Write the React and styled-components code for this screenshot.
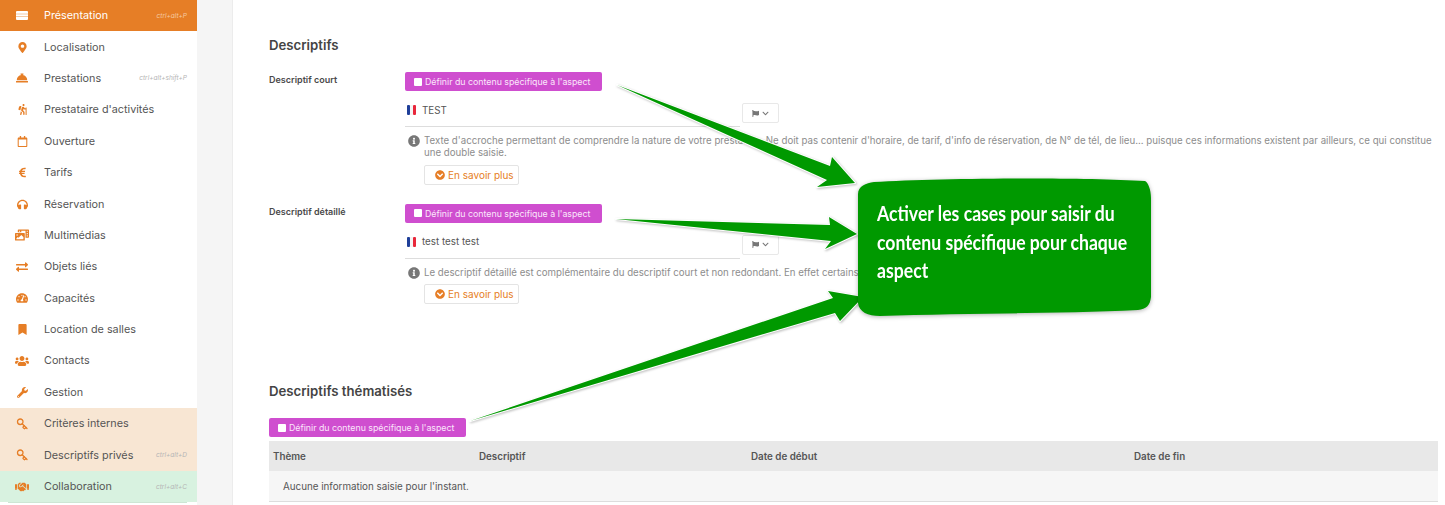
import React from "react";
import styled, { createGlobalStyle } from "styled-components";
import {
  FaMapMarkerAlt,
  FaConciergeBell,
  FaHiking,
  FaRegCalendar,
  FaEuroSign,
  FaHeadphones,
  FaPhotoVideo,
  FaExchangeAlt,
  FaTachometerAlt,
  FaBookmark,
  FaUsers,
  FaWrench,
  FaHandshake,
  FaInfoCircle,
  FaChevronCircleDown,
  FaChevronDown,
  FaFlag,
} from "react-icons/fa";
import { Key } from "lucide-react";

const GlobalStyle = createGlobalStyle`
  html, body { margin: 0; padding: 0; background: #fff; }
  body { font-family: Inter, "Noto Sans", sans-serif; color: #4a4a4a; }
`;

const Page = styled.div`
  position: relative;
  display: flex;
  width: 1445px;
  height: 505px;
  overflow: hidden;
  background: #fff;
`;

const Sidebar = styled.nav`
  width: 197px;
  flex: none;
`;

const tones = {
  active: { bg: "#e67e26", color: "#fff", line: "transparent" },
  peach: { bg: "#f8e6d3", color: "#555", line: "#efe0d0" },
  mint: { bg: "#d8f2e0", color: "#555", line: "#cde6d4" },
  plain: { bg: "#fff", color: "#555", line: "#e4e4e4" },
};

const NavItem = styled.div`
  height: 31.4px;
  box-sizing: border-box;
  background: ${(p) => tones[p.$tone].bg};
  color: ${(p) => tones[p.$tone].color};
  padding: 0 10px 0 8px;
`;

const NavInner = styled.div`
  display: flex;
  align-items: center;
  height: 100%;
  border-bottom: 1px solid ${(p) => tones[p.$tone].line};
`;

const NavIcon = styled.span`
  width: 28px;
  margin-right: 8px;
  display: flex;
  justify-content: center;
  color: ${(p) => (p.$tone === "active" ? "#fff" : "#e67e26")};
  font-size: 11px;
`;

const NavLabel = styled.span`
  font-size: 10.8px;
  flex: 1;
  white-space: nowrap;
`;

const Shortcut = styled.span`
  font-size: 6.5px;
  font-style: italic;
  white-space: nowrap;
  color: ${(p) => (p.$tone === "active" ? "#f5c9a0" : "#b5b5b5")};
`;

const Gutter = styled.div`
  width: 35px;
  flex: none;
  background: #f5f5f5;
  border-right: 1px solid #ececec;
`;

const Main = styled.main`
  flex: 1;
  min-width: 0;
  padding: 37px 7px 0 36px;
`;

const Heading = styled.h2`
  margin: ${(p) => p.$before || 0}px 0 19px;
  font-size: 13.2px;
  line-height: 16px;
  font-weight: 600;
  color: #444;
`;

const Field = styled.div`
  display: grid;
  grid-template-columns: 136px 1fr;
  margin-bottom: 19px;
`;

const FieldLabel = styled.div`
  font-size: 9px;
  font-weight: 600;
  line-height: 16px;
  color: #4a4a4a;
`;

const AspectButton = styled.label`
  display: flex;
  align-items: center;
  gap: 3px;
  width: 197px;
  height: 19px;
  box-sizing: border-box;
  padding-left: 9px;
  background: #cf4ecf;
  border-radius: 2px;
  color: #fbe6fb;
  font-size: 8.8px;
  white-space: nowrap;
`;

const AspectCheck = styled.input.attrs({ type: "checkbox", readOnly: true })`
  appearance: none;
  width: 8px;
  height: 8px;
  margin: 0;
  background: #fff;
  border-radius: 1px;
`;

const Editor = styled.div`
  display: flex;
  margin-top: 10px;
  height: 26px;
`;

const InputLine = styled.div`
  width: 335px;
  box-sizing: border-box;
  display: flex;
  align-items: center;
  gap: 6px;
  padding: 0 0 7px 2px;
  border-bottom: 1px solid #ddd;
  font-size: 9.8px;
  color: #555;
`;

const FlagButton = styled.div`
  width: 37px;
  height: 20px;
  box-sizing: border-box;
  margin: 2px 0 0 2px;
  display: flex;
  align-items: center;
  justify-content: center;
  gap: 3px;
  border: 1px solid #e8e8e8;
  border-radius: 2px;
  color: #777;
  font-size: 7px;
`;

const Help = styled.div`
  display: flex;
  gap: 4px;
  margin: 8px 0 5px 3px;
  font-size: 9.7px;
  line-height: 12.4px;
  color: #8d8d8d;
`;

const HelpIcon = styled.span`
  flex: none;
  color: #777;
  font-size: 12px;
  line-height: 12px;
  height: 12px;
`;

const MoreButton = styled.div`
  display: flex;
  align-items: center;
  gap: 3px;
  width: 95px;
  height: 20px;
  box-sizing: border-box;
  margin-left: 19px;
  padding-left: 10px;
  border: 1px solid #e4e4e4;
  border-radius: 2px;
  color: #e67e26;
  font-size: 10px;
  white-space: nowrap;
`;

const Table = styled.div`
  margin-top: 4px;
  font-size: 9.8px;
`;

const TableHead = styled.div`
  display: grid;
  grid-template-columns: 206px 272px 383px 1fr;
  align-items: center;
  height: 30px;
  padding-left: 4px;
  background: #e8e8e8;
  font-weight: 600;
  color: #555;
`;

const TableEmpty = styled.div`
  display: flex;
  align-items: center;
  height: 31px;
  box-sizing: border-box;
  padding-left: 14px;
  background: #f6f6f6;
  border-bottom: 1px solid #ddd;
  color: #555;
`;

const Arrows = styled.svg`
  position: absolute;
  left: 0;
  top: 0;
  pointer-events: none;
  filter: drop-shadow(1px 1px 1px rgba(0, 0, 0, 0.25));
`;

const ArrowShape = styled.polygon`
  fill: #009900;
  stroke: #fff;
  stroke-width: 2px;
  stroke-linejoin: round;
  paint-order: stroke;
`;

const Callout = styled.div`
  position: absolute;
  left: 858px;
  top: 178px;
  width: 293px;
  height: 138px;
  filter: drop-shadow(0 1px 2px rgba(0, 0, 0, 0.3));
`;

const CalloutShape = styled.svg`
  position: absolute;
  inset: 0;
`;

const CalloutText = styled.div`
  position: relative;
  padding: 21px 0 0 19px;
  font-family: Lato, "Noto Sans", sans-serif;
  font-size: 21px;
  font-weight: 700;
  line-height: 28.5px;
  color: #fff;
  white-space: nowrap;
  transform: scaleX(0.84);
  transform-origin: 19px 0;
`;

const KeyIcon = styled(Key)`
  transform: rotate(90deg);
`;

const PanelIcon = () => (
  <svg width="12" height="9" viewBox="0 0 12 9">
    <rect width="12" height="9" rx="1" fill="#fff" />
    <rect y="2.5" width="12" height="1" fill="#f3c9a3" />
    <rect y="5" width="12" height="1" fill="#f3c9a3" />
  </svg>
);

const FrenchFlag = () => (
  <svg width="9" height="10" viewBox="0 0 9 10">
    <rect width="3" height="10" rx="1" fill="#1f3f99" />
    <rect x="3" width="3" height="10" fill="#f4f4f4" />
    <rect x="6" width="3" height="10" rx="1" fill="#e8273a" />
  </svg>
);

const navItems = [
  { label: "Présentation", icon: <PanelIcon />, tone: "active", shortcut: "ctrl+alt+P" },
  { label: "Localisation", icon: <FaMapMarkerAlt /> },
  { label: "Prestations", icon: <FaConciergeBell size={12} />, shortcut: "ctrl+alt+shift+P" },
  { label: "Prestataire d'activités", icon: <FaHiking /> },
  { label: "Ouverture", icon: <FaRegCalendar /> },
  { label: "Tarifs", icon: <FaEuroSign /> },
  { label: "Réservation", icon: <FaHeadphones /> },
  { label: "Multimédias", icon: <FaPhotoVideo size={14} /> },
  { label: "Objets liés", icon: <FaExchangeAlt size={12} /> },
  { label: "Capacités", icon: <FaTachometerAlt size={12} /> },
  { label: "Location de salles", icon: <FaBookmark /> },
  { label: "Contacts", icon: <FaUsers size={14} /> },
  { label: "Gestion", icon: <FaWrench /> },
  { label: "Critères internes", icon: <KeyIcon size={12} strokeWidth={2.6} />, tone: "peach" },
  { label: "Descriptifs privés", icon: <KeyIcon size={12} strokeWidth={2.6} />, tone: "peach", shortcut: "ctrl+alt+D" },
  { label: "Collaboration", icon: <FaHandshake size={14} />, tone: "mint", shortcut: "ctrl+alt+C" },
];

const arrows = [
  "617,85 830,166 832,157 855,183 817,187 827,180",
  "616,219 830,225 829,217 857,234 825,249 831,241",
  "470,421 833,298 828,291 863,297 840,321 835,313",
];

const Aspect = () => (
  <AspectButton>
    <AspectCheck />
    Définir du contenu spécifique à l'aspect
  </AspectButton>
);

const Description = ({ label, value, children }) => (
  <Field>
    <FieldLabel>{label}</FieldLabel>
    <div>
      <Aspect />
      <Editor>
        <InputLine>
          <FrenchFlag />
          {value}
        </InputLine>
        <FlagButton>
          <FaFlag />
          <FaChevronDown />
        </FlagButton>
      </Editor>
      <Help>
        <HelpIcon>
          <FaInfoCircle />
        </HelpIcon>
        <span>{children}</span>
      </Help>
      <MoreButton>
        <FaChevronCircleDown />
        En savoir plus
      </MoreButton>
    </div>
  </Field>
);

const App = () => {
  return (
    <Page>
      <GlobalStyle />
      <Sidebar>
        {navItems.map((item) => {
          const tone = item.tone || "plain";
          return (
            <NavItem key={item.label} $tone={tone}>
              <NavInner $tone={tone}>
                <NavIcon $tone={tone}>{item.icon}</NavIcon>
                <NavLabel>{item.label}</NavLabel>
                {item.shortcut && <Shortcut $tone={tone}>{item.shortcut}</Shortcut>}
              </NavInner>
            </NavItem>
          );
        })}
      </Sidebar>
      <Gutter />
      <Main>
        <Heading>Descriptifs</Heading>
        <Description label="Descriptif court" value="TEST">
          Texte d'accroche permettant de comprendre la nature de votre prestation. Ne doit pas
          contenir d'horaire, de tarif, d'info de réservation, de N° de tél, de lieu... puisque ces
          informations existent par ailleurs, ce qui constitue une double saisie.
        </Description>
        <Description label="Descriptif détaillé" value="test test test">
          Le descriptif détaillé est complémentaire du descriptif court et non redondant. En effet
          certains
        </Description>
        <Heading $before={79}>Descriptifs thématisés</Heading>
        <Aspect />
        <Table>
          <TableHead>
            <span>Thème</span>
            <span>Descriptif</span>
            <span>Date de début</span>
            <span>Date de fin</span>
          </TableHead>
          <TableEmpty>Aucune information saisie pour l'instant.</TableEmpty>
        </Table>
      </Main>
      <Arrows width="1445" height="505" viewBox="0 0 1445 505">
        {arrows.map((points) => (
          <ArrowShape key={points} points={points} />
        ))}
      </Arrows>
      <Callout>
        <CalloutShape width="293" height="138" viewBox="0 0 293 138">
          <path
            d="M0 16C0 8 8 5 16 4C80 0 220-1 287 3C290 4 293 12 293 20L293 119C292 128 288 131 280 132C200 136 100 135 22 138C10 138 1 134 0 125Z"
            fill="#009900"
          />
        </CalloutShape>
        <CalloutText>
          Activer les cases pour saisir du
          <br />
          contenu spécifique pour chaque
          <br />
          aspect
        </CalloutText>
      </Callout>
    </Page>
  );
};

export default App;
